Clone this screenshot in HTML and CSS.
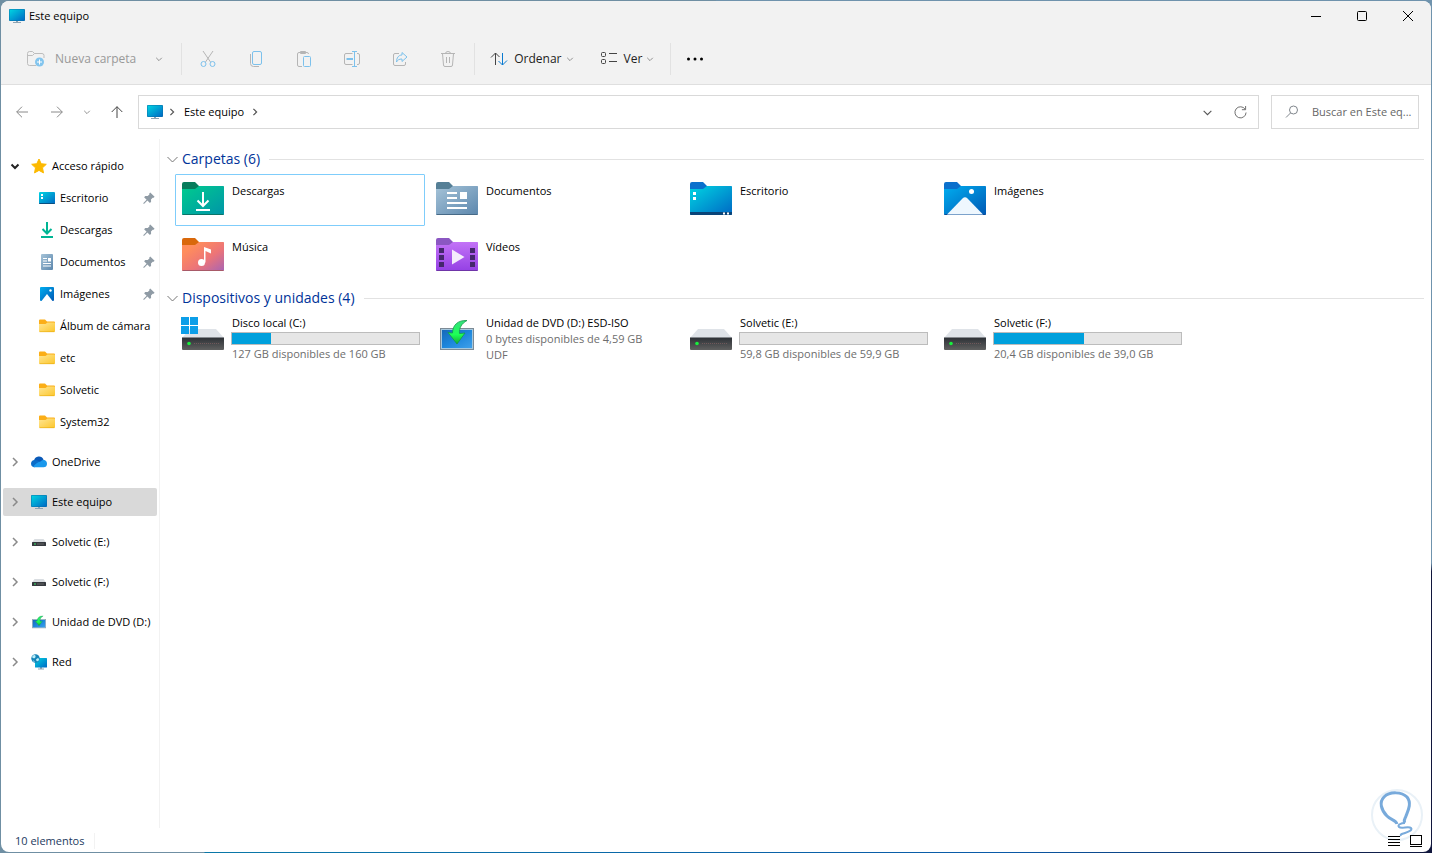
FILE: index.html
```html
<!DOCTYPE html>
<html lang="es">
<head>
    <meta charset="UTF-8">
    <meta name="viewport" content="width=device-width, initial-scale=1.0">
    <title>Este equipo</title>
    <link rel="stylesheet" href="styles.css">
</head>
<body>
    <svg class="sprite" aria-hidden="true">
        <defs>
            <linearGradient id="g-pc" x1="0" y1="0" x2="1" y2="1"><stop offset="0" stop-color="#00d5e2"/><stop offset="1" stop-color="#0068c4"/></linearGradient>
            <linearGradient id="g-green" x1="0" y1="0" x2="1" y2="1"><stop offset="0" stop-color="#00cc8e"/><stop offset="1" stop-color="#0095a8"/></linearGradient>
            <linearGradient id="g-doc" x1="0" y1="0" x2="1" y2="1"><stop offset="0" stop-color="#a5c3d8"/><stop offset="1" stop-color="#5c87ad"/></linearGradient>
            <linearGradient id="g-img" x1="0" y1="0" x2="1" y2="1"><stop offset="0" stop-color="#00aef0"/><stop offset="1" stop-color="#0058b4"/></linearGradient>
            <linearGradient id="g-music" x1="0" y1="0" x2="1" y2="1"><stop offset="0.2" stop-color="#ff8d5c"/><stop offset="0.6" stop-color="#ec7478"/><stop offset="1" stop-color="#a864b4"/></linearGradient>
            <linearGradient id="g-video" x1="0" y1="0" x2="0" y2="1"><stop offset="0" stop-color="#c373f7"/><stop offset="1" stop-color="#9440e4"/></linearGradient>
            <linearGradient id="g-yellow" x1="0" y1="0" x2="1" y2="1"><stop offset="0" stop-color="#ffe694"/><stop offset="1" stop-color="#fcc62c"/></linearGradient>
            <linearGradient id="g-drive" x1="0" y1="0" x2="0" y2="1"><stop offset="0" stop-color="#2c3035"/><stop offset="1" stop-color="#606060"/></linearGradient>
            <linearGradient id="g-arrow" x1="0" y1="0" x2="0" y2="1"><stop offset="0" stop-color="#35e07d"/><stop offset="0.6" stop-color="#1dff57"/><stop offset="1" stop-color="#13a832"/></linearGradient>
            <linearGradient id="g-screen" x1="0" y1="0" x2="1" y2="1"><stop offset="0" stop-color="#1668b8"/><stop offset="0.5" stop-color="#1c86dc"/><stop offset="1" stop-color="#3fa0ea"/></linearGradient>
        </defs>
        <symbol id="i-pc" viewBox="0 0 16 16">
            <path d="M7 12h2v2h3v1H4v-1h3z" fill="#8ea3b3"/>
            <rect y="1" width="16" height="12" rx="1" fill="#0b6fa8"/>
            <rect x="0.5" y="1.5" width="15" height="11" rx="0.5" fill="url(#g-pc)"/>
        </symbol>
        <symbol id="i-down" viewBox="0 0 10 10"><path d="M1.5 3.5 5 7l3.5-3.5" fill="none" stroke="currentColor"/></symbol>
        <symbol id="i-right" viewBox="0 0 10 10"><path d="M3 1l4 4-4 4" fill="none" stroke="currentColor" stroke-width="1.5"/></symbol>
        <symbol id="i-star" viewBox="0 0 16 16"><path d="M8 1l2.2 4.7 5.1.6-3.8 3.5 1 5.1L8 12.4l-4.5 2.5 1-5.1L.7 6.3l5.1-.6z" fill="#fcb900" stroke="#fcb900" stroke-linejoin="round"/></symbol>
        <symbol id="i-desktop" viewBox="0 0 16 16"><rect y="2" width="16" height="12" rx="1" fill="url(#g-pc)"/><path d="M2 4h2v2H2zM2 7h2v2H2z" fill="#fff"/><path d="M0 13h16a1 1 0 0 1-1 1H1a1 1 0 0 1-1-1z" fill="#0a4f80"/></symbol>
        <symbol id="i-download" viewBox="0 0 16 16"><path d="M8 0v11M3.500 7L8 11.500 12.500 7" fill="none" stroke="#00b594" stroke-width="2"/><path d="M2 14h12v2H2z" fill="#00b594"/></symbol>
        <symbol id="i-doc" viewBox="0 0 16 16"><rect x="2" width="12" height="16" rx="1" fill="url(#g-doc)"/><path d="M4 4.500h4M4 7h4M4 9.500h8M4 12h8" stroke="#fff"/><path d="M9 4h3v3.500H9z" fill="#fff"/></symbol>
        <symbol id="i-image" viewBox="0 0 16 16"><rect x="1" y="1" width="14" height="14" rx="1" fill="url(#g-img)"/><path d="M2.500 15L8 8l5.500 7z" fill="#fff"/><circle cx="11.500" cy="4.500" r="1.200" fill="#fff"/></symbol>
        <symbol id="i-folder" viewBox="0 0 16 16"><path d="M0 2.500a1 1 0 0 1 1-1h5l2 2h7a1 1 0 0 1 1 1V8H0z" fill="#fbae17"/><path d="M0 6h6.500l2-1.500H15a1 1 0 0 1 1 1V13a1 1 0 0 1-1 1H1a1 1 0 0 1-1-1z" fill="url(#g-yellow)"/><path d="M.5 13.700h15" stroke="#e9a90c" stroke-width="0.600"/></symbol>
        <symbol id="i-pin" viewBox="0 0 12 12"><path d="M7.200.4l4.400 4.400-1 1-.9-.1-1.700 1.700.1 2.400-1.200 1.200L4.400 8.500 1.200 11.700l-.9.100.1-.9L3.600 7.700 1.100 5.200 2.300 4l2.400.1 1.700-1.700-.1-.9z" fill="#8f9ba5"/></symbol>
        <symbol id="i-cloud" viewBox="0 0 16 16"><path d="M3 6.500A5 5 0 0 1 12.500 5.500l-2 4.500H3z" fill="#0a5ab8"/><path d="M3.500 6C1.500 6 0 7.500 0 9.700s1.500 3.600 3.700 3.600L10 9C8 6.800 6 6 3.500 6z" fill="#0b6cc8"/><path d="M2.200 13c1.700-3 4.200-4.500 7.300-5.500 1-1.500 3-2 4.500-1.200S16 8 16 10c0 2-1.400 3.300-3.400 3.300H3.500z" fill="#1a98ec"/></symbol>
        <symbol id="i-drive-sm" viewBox="0 0 16 16"><path d="M3.500 5h9L15 8.500H1z" fill="#d9dde1"/><rect x="1" y="8" width="14" height="4" rx="0.500" fill="#35393e"/><rect x="3" y="9.500" width="2" height="1" fill="#3ce06a"/><path d="M6 10h7" stroke="#666"/></symbol>
        <symbol id="i-dvd" viewBox="0 0 34 32">
            <rect x="0.500" y="9.500" width="33" height="21" fill="#a5c8de" stroke="#7d8b96"/>
            <rect x="2" y="11" width="30" height="18" fill="url(#g-screen)"/>
            <path d="M27 1.500C18 1 12.500 6 12.500 14L8 13.500l9 11.500L25 14l-5.500.5C19 9 21.500 4.500 27 1.500z" fill="url(#g-arrow)" stroke="#14984a" stroke-width="0.800"/>
        </symbol>
        <symbol id="i-net" viewBox="0 0 16 16"><path d="M9 13h2v1.500h2v1H7v-1h2z" fill="#8ea3b3"/><rect x="4" y="4" width="12" height="9.500" rx="0.500" fill="url(#g-pc)"/><circle cx="4.500" cy="4.500" r="4.200" fill="#1684b8"/><path d="M1 3c2-3 4-2 3.500 0S2 4.500 1 3zM5 5.500c1.500-2 3-1.500 3 0S5.500 8.500 5 5.500zM2 6l2 2-1.500-.3z" fill="#b9edf8"/></symbol>
        <symbol id="i-drive" viewBox="0 0 42 24">
            <path d="M8 1h26l8 9H0z" fill="#dfe3e8"/>
            <path d="M0 9.500h42V21a1 1 0 0 1-1 1H1a1 1 0 0 1-1-1z" fill="url(#g-drive)"/>
            <path d="M12 15.500h26" stroke="#70585a" stroke-dasharray="1 1"/>
            <circle cx="7" cy="15.500" r="1.800" fill="#18f03c"/>
        </symbol>
        <symbol id="i-win" viewBox="0 0 17 17"><path d="M0 0h8v8H0zM9 0h8v8H9zM0 9h8v8H0zM9 9h8v8H9z" fill="#0c9ee8"/></symbol>
    </svg>

    <div class="window">
        <header class="titlebar">
            <svg class="icon"><use href="#i-pc"/></svg>
            <h1>Este equipo</h1>
            <div class="window-buttons">
                <button aria-label="Minimizar"><svg viewBox="0 0 10 10"><path d="M0 5.500h10" stroke="#000"/></svg></button>
                <button aria-label="Maximizar"><svg viewBox="0 0 10 10"><rect x="0.500" y="0.500" width="9" height="9" rx="1" fill="none" stroke="#000"/></svg></button>
                <button aria-label="Cerrar"><svg viewBox="0 0 10 10"><path d="M0 0l10 10M10 0L0 10" stroke="#000"/></svg></button>
            </div>
        </header>

        <div class="toolbar">
            <button class="tool new-folder" disabled>
                <svg viewBox="0 0 18 18" fill="none" stroke="#bdbdbd"><path d="M9 15.500H2.500a2 2 0 0 1-2-2v-10a2 2 0 0 1 2-2h3l2 2H15a2 2 0 0 1 2 2V8M.5 5.500h5l2-2"/><circle cx="12.500" cy="12" r="4.500" fill="#83c5ee" stroke="none"/><path d="M12.500 9.500v5M10 12h5" stroke="#fff"/></svg>
                <span>Nueva carpeta</span>
                <svg class="chevron"><use href="#i-down"/></svg>
            </button>
            <div class="tool-group">
                <button class="tool-icon" aria-label="Cortar" disabled><svg viewBox="0 0 16 16" fill="none"><path d="M3 0l7.500 11M13 0L5.500 11" stroke="#b5b5b5"/><circle cx="3.500" cy="13" r="2.500" stroke="#7cc1ec"/><circle cx="12.500" cy="13" r="2.500" stroke="#7cc1ec"/></svg></button>
                <button class="tool-icon" aria-label="Copiar" disabled><svg viewBox="0 0 16 16" fill="none"><path d="M2.500 3v9.500a3 3 0 0 0 3 3H11" stroke="#b5b5b5"/><rect x="4.500" y="0.500" width="9" height="13" rx="1.500" stroke="#7cc1ec"/></svg></button>
                <button class="tool-icon" aria-label="Pegar" disabled><svg viewBox="0 0 16 16" fill="none"><path d="M6 15.500H3a1.500 1.500 0 0 1-1.500-1.500V3A1.500 1.500 0 0 1 3 1.500h8A1.500 1.500 0 0 1 12.500 3M4.500.5h5v2h-5z" stroke="#b5b5b5"/><rect x="7.500" y="5.500" width="7" height="10" rx="1" stroke="#7cc1ec"/></svg></button>
                <button class="tool-icon" aria-label="Cambiar nombre" disabled><svg viewBox="0 0 16 16" fill="none"><path d="M8.500 13.500H2A1.500 1.500 0 0 1 .5 12V4A1.500 1.500 0 0 1 2 2.500h6.500M13 2.500h1A1.500 1.500 0 0 1 15.500 4v8a1.500 1.500 0 0 1-1.500 1.500h-1" stroke="#b5b5b5"/><path d="M8 .5h5M8 15.500h5M10.500.5v15" stroke="#7cc1ec"/><path d="M2.500 8H9" stroke="#7cc1ec" stroke-width="2"/></svg></button>
                <button class="tool-icon" aria-label="Compartir" disabled><svg viewBox="0 0 16 16" fill="none"><path d="M7 2.500H3A1.500 1.500 0 0 0 1.500 4v9A1.500 1.500 0 0 0 3 14.500h9a1.500 1.500 0 0 0 1.500-1.500v-2" stroke="#b5b5b5"/><path d="M10 1.500L15 6l-5 4.500V8C7 8 5.500 9 4.500 11c0-4 2-7 5.500-7z" stroke="#7cc1ec" stroke-linejoin="round"/></svg></button>
                <button class="tool-icon" aria-label="Eliminar" disabled><svg viewBox="0 0 16 16" fill="none" stroke="#b5b5b5"><path d="M1 2.500h14M5.500 2.500a2.500 2 0 0 1 5 0M2.500 2.500l1 11.500a1.500 1.500 0 0 0 1.500 1.500h6a1.500 1.500 0 0 0 1.500-1.500l1-11.500M6.500 6v6M9.500 6v6"/></svg></button>
            </div>
            <button class="tool sort">
                <svg viewBox="0 0 18 18" fill="none"><path d="M5.500 15V3M1 7.500L5.500 3l4 4" stroke="#444"/><path d="M12.500 3v12M8.500 11l4 4L17 10.500" stroke="#0a7ad0"/></svg>
                <span>Ordenar</span>
                <svg class="chevron"><use href="#i-down"/></svg>
            </button>
            <button class="tool view">
                <svg viewBox="0 0 18 18" fill="none" stroke="#444"><rect x="1.500" y="2.500" width="4" height="4" rx="1"/><rect x="1.500" y="9.500" width="4" height="4" rx="1"/><path d="M9 3.500h8M9 11.500h8"/></svg>
                <span>Ver</span>
                <svg class="chevron"><use href="#i-down"/></svg>
            </button>
            <button class="tool more" aria-label="Ver más"><svg viewBox="0 0 18 18"><circle cx="2.500" cy="9" r="1.500"/><circle cx="9" cy="9" r="1.500"/><circle cx="15.500" cy="9" r="1.500"/></svg></button>
        </div>

        <div class="navbar">
            <div class="nav-buttons">
                <button aria-label="Atrás"><svg viewBox="0 0 12 12"><path d="M12 6H.7M6 .7L.7 6 6 11.300" fill="none" stroke="#8a8a8a"/></svg></button>
                <button aria-label="Adelante"><svg viewBox="0 0 12 12"><path d="M0 6h11.300M6 .7L11.300 6 6 11.300" fill="none" stroke="#8a8a8a"/></svg></button>
                <button class="recent" aria-label="Ubicaciones recientes"><svg class="chevron"><use href="#i-down"/></svg></button>
                <button aria-label="Subir"><svg viewBox="0 0 12 12"><path d="M6 12V.7M.7 6L6 .7 11.300 6" fill="none" stroke="#444"/></svg></button>
            </div>
            <div class="address">
                <svg class="icon"><use href="#i-pc"/></svg>
                <svg class="crumb-arrow"><use href="#i-right"/></svg>
                <button class="crumb">Este equipo</button>
                <svg class="crumb-arrow"><use href="#i-right"/></svg>
                <button class="address-action" aria-label="Historial"><svg class="chevron-lg"><use href="#i-down"/></svg></button>
                <button class="address-action" aria-label="Actualizar"><svg class="refresh" viewBox="0 0 14 14" fill="none" stroke="#666"><path d="M12 3.500A6 6 0 1 0 13 7M12.500 0v4h-4"/></svg></button>
            </div>
            <label class="search">
                <svg viewBox="0 0 14 14" fill="none" stroke="#80868c"><circle cx="8.500" cy="5" r="4"/><path d="M5.500 8L1 12.500"/></svg>
                <input type="text" aria-label="Buscar" placeholder="Buscar en Este eq...">
            </label>
        </div>

        <div class="main">
            <nav class="sidebar">
                <a href="#" class="row open"><svg class="arrow"><use href="#i-down"/></svg><svg class="icon"><use href="#i-star"/></svg>Acceso rápido</a>
                <a href="#" class="row child"><svg class="icon"><use href="#i-desktop"/></svg>Escritorio<svg class="pin"><use href="#i-pin"/></svg></a>
                <a href="#" class="row child"><svg class="icon"><use href="#i-download"/></svg>Descargas<svg class="pin"><use href="#i-pin"/></svg></a>
                <a href="#" class="row child"><svg class="icon"><use href="#i-doc"/></svg>Documentos<svg class="pin"><use href="#i-pin"/></svg></a>
                <a href="#" class="row child"><svg class="icon"><use href="#i-image"/></svg>Imágenes<svg class="pin"><use href="#i-pin"/></svg></a>
                <a href="#" class="row child"><svg class="icon"><use href="#i-folder"/></svg>Álbum de cámara</a>
                <a href="#" class="row child"><svg class="icon"><use href="#i-folder"/></svg>etc</a>
                <a href="#" class="row child"><svg class="icon"><use href="#i-folder"/></svg>Solvetic</a>
                <a href="#" class="row child"><svg class="icon"><use href="#i-folder"/></svg>System32</a>
                <a href="#" class="row root"><svg class="arrow"><use href="#i-right"/></svg><svg class="icon"><use href="#i-cloud"/></svg>OneDrive</a>
                <a href="#" class="row root selected"><svg class="arrow"><use href="#i-right"/></svg><svg class="icon"><use href="#i-pc"/></svg>Este equipo</a>
                <a href="#" class="row root"><svg class="arrow"><use href="#i-right"/></svg><svg class="icon"><use href="#i-drive-sm"/></svg>Solvetic (E:)</a>
                <a href="#" class="row root"><svg class="arrow"><use href="#i-right"/></svg><svg class="icon"><use href="#i-drive-sm"/></svg>Solvetic (F:)</a>
                <a href="#" class="row root"><svg class="arrow"><use href="#i-right"/></svg><svg class="icon dvd-sm"><use href="#i-dvd"/></svg>Unidad de DVD (D:)</a>
                <a href="#" class="row root"><svg class="arrow"><use href="#i-right"/></svg><svg class="icon"><use href="#i-net"/></svg>Red</a>
            </nav>

            <main class="content">
                <section>
                    <h2><svg class="group-arrow" viewBox="0 0 11 11"><path d="M.5 3l5 5 5-5" fill="none" stroke="#777"/></svg>Carpetas (6)</h2>
                    <div class="tiles">
                        <a href="#" class="tile focused">
                            <svg class="folder" viewBox="0 0 42 34"><path d="M0 2a2 2 0 0 1 2-2h11l4 4h23a2 2 0 0 1 2 2v6H0z" fill="#087c5c"/><path d="M0 7h13l4-3h24a1 1 0 0 1 1 1v27a1 1 0 0 1-1 1H1a1 1 0 0 1-1-1z" fill="url(#g-green)"/><path d="M.5 32.500h41" stroke="#0b7468"/><path d="M21 10v14M15.500 18.500L21 24l5.500-5.500M14 28h14" fill="none" stroke="#fff" stroke-width="2"/></svg>
                            <span>Descargas</span>
                        </a>
                        <a href="#" class="tile">
                            <svg class="folder" viewBox="0 0 42 34"><path d="M0 2a2 2 0 0 1 2-2h11l4 4h23a2 2 0 0 1 2 2v6H0z" fill="#557f96"/><path d="M0 7h13l4-3h24a1 1 0 0 1 1 1v27a1 1 0 0 1-1 1H1a1 1 0 0 1-1-1z" fill="url(#g-doc)"/><path d="M.5 32.500h41" stroke="#476a87"/><path d="M11 11h10M11 16h10M11 21h20M11 26h20" stroke="#fff" stroke-width="2"/><path d="M24 10h7v7h-7z" fill="#fff"/></svg>
                            <span>Documentos</span>
                        </a>
                        <a href="#" class="tile">
                            <svg class="folder" viewBox="0 0 42 34"><path d="M0 2a2 2 0 0 1 2-2h11l4 4h23a2 2 0 0 1 2 2v6H0z" fill="#0b70cc"/><path d="M0 7h13l4-3h24a1 1 0 0 1 1 1v27a1 1 0 0 1-1 1H1a1 1 0 0 1-1-1z" fill="url(#g-pc)"/><path d="M0 30h42v2a1 1 0 0 1-1 1H1a1 1 0 0 1-1-1z" fill="#0a4478"/><path d="M3 10h3v3H3zM3 15h3v3H3zM33 30.500h2v2h-2zM37 30.500h2v2h-2z" fill="#fff"/></svg>
                            <span>Escritorio</span>
                        </a>
                        <a href="#" class="tile">
                            <svg class="folder" viewBox="0 0 42 34"><path d="M0 2a2 2 0 0 1 2-2h11l4 4h23a2 2 0 0 1 2 2v6H0z" fill="#0b70cc"/><path d="M0 7h13l4-3h24a1 1 0 0 1 1 1v27a1 1 0 0 1-1 1H1a1 1 0 0 1-1-1z" fill="url(#g-img)"/><path d="M.5 32.500h41" stroke="#0a4c98"/><path d="M3 32.500L18.500 16.500q2.500-2.500 5 0L39 32.500z" fill="#eef7fe"/><circle cx="27.500" cy="9.500" r="2.500" fill="#fff"/></svg>
                            <span>Imágenes</span>
                        </a>
                        <a href="#" class="tile">
                            <svg class="folder" viewBox="0 0 42 34"><path d="M0 2a2 2 0 0 1 2-2h11l4 4h23a2 2 0 0 1 2 2v6H0z" fill="#d9680b"/><path d="M0 7h13l4-3h24a1 1 0 0 1 1 1v27a1 1 0 0 1-1 1H1a1 1 0 0 1-1-1z" fill="url(#g-music)"/><path d="M.5 32.500h41" stroke="#a85a68"/><circle cx="19.500" cy="24.500" r="3.500" fill="#fff"/><path d="M22 24.500V9l7 2.500v4L23.500 13v11.500z" fill="#fff"/></svg>
                            <span>Música</span>
                        </a>
                        <a href="#" class="tile">
                            <svg class="folder" viewBox="0 0 42 34"><path d="M0 2a2 2 0 0 1 2-2h11l4 4h23a2 2 0 0 1 2 2v6H0z" fill="#8b57c2"/><path d="M0 7h13l4-3h24a1 1 0 0 1 1 1v27a1 1 0 0 1-1 1H1a1 1 0 0 1-1-1z" fill="url(#g-video)"/><path d="M.5 32.500h41" stroke="#6f35a8"/><path d="M3 10h5v5H3zM3 17h5v5H3zM3 24h5v5H3zM34 10h5v5h-5zM34 17h5v5h-5zM34 24h5v5h-5z" fill="#44276c"/><path d="M16 11.500v15L28.500 19z" fill="#f4ecfb"/></svg>
                            <span>Vídeos</span>
                        </a>
                    </div>
                </section>

                <section>
                    <h2><svg class="group-arrow" viewBox="0 0 11 11"><path d="M.5 3l5 5 5-5" fill="none" stroke="#777"/></svg>Dispositivos y unidades (4)</h2>
                    <div class="tiles">
                        <a href="#" class="tile drive">
                            <div class="drive-icon"><svg><use href="#i-drive"/></svg><svg class="badge"><use href="#i-win"/></svg></div>
                            <div class="drive-info">
                                <span>Disco local (C:)</span>
                                <div class="bar"><div class="bar-fill" style="width: 21%"></div></div>
                                <small>127 GB disponibles de 160 GB</small>
                            </div>
                        </a>
                        <a href="#" class="tile drive">
                            <div class="drive-icon dvd"><svg><use href="#i-dvd"/></svg></div>
                            <div class="drive-info">
                                <span>Unidad de DVD (D:) ESD-ISO</span>
                                <small>0 bytes disponibles de 4,59 GB</small>
                                <small>UDF</small>
                            </div>
                        </a>
                        <a href="#" class="tile drive">
                            <div class="drive-icon"><svg><use href="#i-drive"/></svg></div>
                            <div class="drive-info">
                                <span>Solvetic (E:)</span>
                                <div class="bar"><div class="bar-fill" style="width: 0%"></div></div>
                                <small>59,8 GB disponibles de 59,9 GB</small>
                            </div>
                        </a>
                        <a href="#" class="tile drive">
                            <div class="drive-icon"><svg><use href="#i-drive"/></svg></div>
                            <div class="drive-info">
                                <span>Solvetic (F:)</span>
                                <div class="bar"><div class="bar-fill" style="width: 48%"></div></div>
                                <small>20,4 GB disponibles de 39,0 GB</small>
                            </div>
                        </a>
                    </div>
                </section>
            </main>
        </div>

        <footer class="statusbar">
            <span class="count">10 elementos</span>
            <div class="view-switch">
                <button aria-label="Detalles"><svg viewBox="0 0 12 12"><path d="M0 1.500h12M0 4.500h12M0 7.500h12M0 10.500h12" stroke="#000"/></svg></button>
                <button aria-label="Iconos grandes"><svg viewBox="0 0 12 12"><rect x="0.500" y="0.500" width="11" height="9" fill="none" stroke="#000"/><path d="M0 11.500h12" stroke="#000"/></svg></button>
            </div>
        </footer>

        <svg class="watermark" viewBox="0 0 52 52" fill="none" aria-hidden="true">
            <circle cx="26" cy="26" r="25" stroke="#e9f1f7" stroke-width="2"/>
            <path d="M26 35c-1-4-6-4-10-8-6-6-8-14-3-19 6-6 18-5 23 0 5 6 1 14-1 19-1 3-3 5-1 7" stroke="#78aadb" stroke-width="3"/>
            <path d="M34 34c-4 0-8 2-6 4s10-1 12 1-3 4-6 5-5 1-4 3" stroke="#78aadb" stroke-width="2"/>
        </svg>
    </div>
</body>
</html>
```

FILE: styles.css
```css
* {
    box-sizing: border-box;
}
body {
    margin: 0;
    padding: 1px;
    min-height: 100vh;
    display: flex;
    font-family: "Open Sans", "Noto Sans", sans-serif;
    font-size: 11px;
    line-height: 16px;
    color: #000;
    background:
        linear-gradient(90deg, #6f8fa3 204px, #0a78a8 205px, #0a5aa8 70%, #10163c) bottom / 100% 1px no-repeat,
        linear-gradient(#6f93ad 66%, #10163c 67%) right / 50% 100% no-repeat,
        #6f8fa3;
}
button {
    display: flex;
    align-items: center;
    justify-content: center;
    border: none;
    padding: 0;
    background: none;
    font: inherit;
    color: inherit;
}
a {
    color: inherit;
    text-decoration: none;
}
svg {
    display: block;
    flex-shrink: 0;
}
.sprite {
    position: absolute;
    width: 0;
    height: 0;
}
.icon {
    width: 16px;
    height: 16px;
}
.chevron {
    width: 8px;
    height: 8px;
    color: #777;
}
.window {
    position: relative;
    flex: 1;
    min-width: 0;
    display: flex;
    flex-direction: column;
    background: #fff;
    border-radius: 8px;
    overflow: hidden;
}

/* title bar */
.titlebar {
    display: flex;
    align-items: center;
    height: 30px;
    padding-left: 8px;
    gap: 4px;
    background: #f2f2f2;
}
h1 {
    margin: 0;
    font-size: 11px;
    font-weight: 400;
}
.window-buttons {
    display: flex;
    margin-left: auto;
}
.window-buttons button {
    width: 46px;
    height: 28px;
}
.window-buttons svg {
    width: 10px;
    height: 10px;
}

/* toolbar */
.toolbar {
    display: flex;
    align-items: center;
    height: 54px;
    padding: 2px 0 0 26px;
    background: #f2f2f2;
    border-bottom: 1px solid #dfdfdf;
    font-size: 12px;
}
.tool {
    height: 32px;
    color: #222;
}
.tool svg:first-child {
    width: 18px;
    height: 18px;
}
.new-folder {
    gap: 10px;
    padding-right: 18px;
    color: #999;
}
.new-folder .chevron {
    margin-left: 9px;
}
.tool-group {
    display: flex;
    padding: 0 2px;
    border-left: 1px solid #e2e2e2;
    border-right: 1px solid #e2e2e2;
}
.tool-icon {
    width: 48px;
    height: 32px;
}
.tool-icon svg {
    width: 16px;
    height: 16px;
}
.sort,
.view {
    gap: 6px;
}
.sort .chevron,
.view .chevron {
    margin-left: -2px;
}
.sort {
    margin-left: 15px;
}
.view {
    margin-left: 26px;
    padding-right: 16px;
    border-right: 1px solid #e2e2e2;
}
.more {
    margin-left: 15px;
}

/* address row */
.navbar {
    display: flex;
    align-items: center;
    height: 54px;
    padding-right: 12px;
}
.nav-buttons {
    display: flex;
    padding-left: 3px;
    margin-right: 4px;
}
.nav-buttons button {
    width: 35px;
    height: 32px;
}
.nav-buttons .recent {
    width: 25px;
}
.nav-buttons svg {
    width: 12px;
    height: 12px;
}
.nav-buttons .chevron {
    width: 8px;
}
.address,
.search {
    display: flex;
    align-items: center;
    height: 34px;
    border: 1px solid #d9d9d9;
}
.address {
    flex: 1;
    min-width: 0;
    padding: 0 1px 0 8px;
}
.crumb-arrow {
    width: 8px;
    height: 8px;
    margin: 0 5px;
    color: #555;
}
.crumb {
    padding: 0 2px 0 3px;
}
.address-action {
    width: 33px;
    height: 32px;
}
.crumb-arrow + .address-action {
    margin-left: auto;
}
.chevron-lg {
    width: 11px;
    height: 11px;
    color: #555;
}
.refresh {
    width: 13px;
    height: 13px;
}
.search {
    width: 148px;
    margin-left: 12px;
    padding-left: 13px;
    gap: 13px;
}
.search svg {
    width: 14px;
    height: 14px;
}
.search input {
    flex: 1;
    min-width: 0;
    padding: 0;
    border: none;
    outline: none;
    background: none;
    font: inherit;
}
.search input::placeholder {
    color: #666;
    opacity: 1;
}

/* navigation pane */
.main {
    flex: 1;
    display: flex;
}
.sidebar {
    width: 159px;
    padding: 13px 2px 0;
    border-right: 1px solid #f2f2f2;
}
.row {
    display: flex;
    align-items: center;
    height: 28px;
    margin-bottom: 4px;
    padding: 0 2px 0 7px;
    gap: 5px;
    border-radius: 2px;
    white-space: nowrap;
}
.row.child {
    padding-left: 36px;
}
.row.root {
    margin: 12px 0;
}
.row.selected {
    background: #d9d9d9;
}
.arrow {
    width: 10px;
    height: 10px;
    margin-right: 6px;
    color: #8a8a8a;
}
.open .arrow {
    color: #222;
    stroke-width: 2px;
}
.dvd-sm {
    padding: 1px;
}
.pin {
    width: 12px;
    height: 12px;
    margin-left: auto;
}

/* folder and drive tiles */
.content {
    flex: 1;
    min-width: 0;
    padding: 10px 7px 0;
}
h2 {
    display: flex;
    align-items: center;
    gap: 4px;
    margin: 0;
    font-size: 14px;
    font-weight: 400;
    line-height: 20px;
    color: #003399;
}
h2::after {
    content: "";
    flex: 1;
    height: 1px;
    margin-left: 5px;
    background: #e2e2e2;
}
.group-arrow {
    width: 11px;
    height: 11px;
}
.tiles {
    display: grid;
    grid-template-columns: repeat(auto-fill, 250px);
    gap: 4px;
    padding: 5px 0 6px 8px;
}
.tile {
    display: flex;
    gap: 8px;
    height: 52px;
    padding: 7px 5px 0 6px;
    border: 1px solid transparent;
    border-radius: 1px;
}
.tile.focused {
    border-color: #7fcdfb;
}
.tile > span {
    padding-top: 1px;
}
.folder {
    width: 42px;
    height: 34px;
}
.tile.drive {
    padding: 1px 4px 0 6px;
}
.drive-icon {
    position: relative;
    width: 42px;
    height: 38px;
    padding-top: 13px;
}
.drive-icon svg {
    width: 42px;
    height: 24px;
}
.drive-icon .badge {
    position: absolute;
    left: -1px;
    top: 2px;
    width: 17px;
    height: 17px;
}
.drive-icon.dvd {
    padding: 4px 4px 0;
}
.drive-icon.dvd svg {
    width: 34px;
    height: 32px;
}
.drive-info {
    flex: 1;
    min-width: 0;
}
.drive-info span,
.drive-info small {
    display: block;
    font-size: 11px;
    white-space: nowrap;
}
.drive-info small {
    color: #6d6d6d;
}
.bar {
    height: 13px;
    margin: 1px 0 1px -1px;
    border: 1px solid #bcbcbc;
    background: #e6e6e6;
}
.bar-fill {
    height: 100%;
    background: #00a0dc;
}

/* status bar */
.statusbar {
    display: flex;
    align-items: center;
    justify-content: space-between;
    height: 24px;
    padding: 1px 9px 0 14px;
    color: #1c3a5e;
}
.count {
    padding-right: 10px;
    border-right: 1px solid #f2f2f2;
}
.view-switch {
    display: flex;
    gap: 10px;
    z-index: 1;
}
.view-switch svg {
    width: 12px;
    height: 12px;
}
.watermark {
    position: absolute;
    right: 8px;
    bottom: 11px;
    width: 52px;
    height: 52px;
}
```
